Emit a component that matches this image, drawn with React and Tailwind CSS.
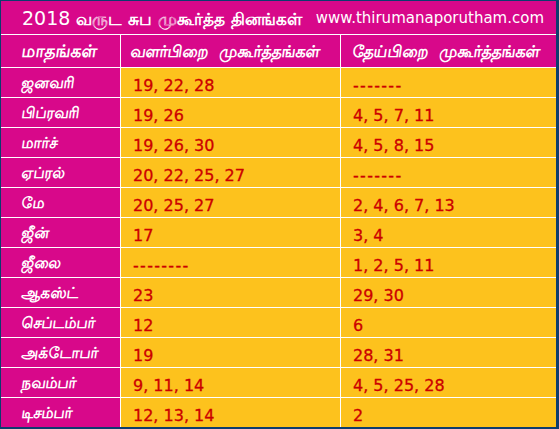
import React from "react";

const rows = [
  ["ஜனவரி", "19, 22, 28", "-------"],
  ["பிப்ரவரி", "19, 26", "4, 5, 7, 11"],
  ["மார்ச்", "19, 26, 30", "4, 5, 8, 15"],
  ["ஏப்ரல்", "20, 22, 25, 27", "-------"],
  ["மே", "20, 25, 27", "2, 4, 6, 7, 13"],
  ["ஜீன்", "17", "3, 4"],
  ["ஜீலை", "--------", "1, 2, 5, 11"],
  ["ஆகஸ்ட்", "23", "29, 30"],
  ["செப்டம்பர்", "12", "6"],
  ["அக்டோபர்", "19", "28, 31"],
  ["நவம்பர்", "9, 11, 14", "4, 5, 25, 28"],
  ["டிசம்பர்", "12, 13, 14", "2"],
];

const font = { fontFamily: '"DejaVu Sans", Verdana, sans-serif' };

function Num({ v }) {
  const dash = v.startsWith("-");
  return (
    <div className="bg-[#fdc21d] text-[#cc0000] text-[16px] leading-[29px] pt-[3px] overflow-hidden pl-[12px] whitespace-nowrap [-webkit-text-stroke:0.3px_#cc0000]">
      <span className={dash ? "tracking-[1.3px]" : ""}>{v}</span>
    </div>
  );
}

export default function App() {
  return (
    <div
      className="w-[559px] h-[429px] bg-[#0d3c6e] pt-px pl-px pr-[3px] pb-[2px]"
      style={font}
    >
      <div className="grid grid-cols-[119px_219px_215px] grid-rows-[33px_32px_repeat(12,29px)] gap-px bg-white h-[426px]">
        <div className="col-span-3 bg-[#d8088a] text-white flex items-center justify-between pl-[21px] pr-[12px] pt-[2px] whitespace-nowrap">
          <span className="text-[19px]">
            2018 <span className="text-[17px] font-bold">வருட சுப முகூர்த்த தினங்கள்</span>
          </span>
          <span className="text-[15px]">www.thirumanaporutham.com</span>
        </div>
        <div className="bg-[#d8088a] text-white text-[17px] font-bold flex items-center pl-[21px] pt-[2px] whitespace-nowrap">
          <span className="inline-block -skew-x-[8deg]">மாதங்கள்</span>
        </div>
        <div className="bg-[#d8088a] text-white text-[16px] font-bold flex items-center pl-[10px] pt-[2px] whitespace-nowrap">
          <span className="inline-block -skew-x-[8deg]">வளர்பிறை&nbsp; முகூர்த்தங்கள்</span>
        </div>
        <div className="bg-[#d8088a] text-white text-[16px] font-bold flex items-center pl-[12px] pt-[2px] whitespace-nowrap">
          <span className="inline-block -skew-x-[8deg]">தேய்பிறை&nbsp; முகூர்த்தங்கள்</span>
        </div>
        {rows.map(([m, a, b]) => (
          <React.Fragment key={m}>
            <div className="bg-[#d8088a] text-white text-[15px] font-bold leading-[29px] pt-[1px] overflow-hidden pl-[21px] whitespace-nowrap">
              <span className="inline-block -skew-x-[8deg]">{m}</span>
            </div>
            <Num v={a} />
            <Num v={b} />
          </React.Fragment>
        ))}
      </div>
    </div>
  );
}
